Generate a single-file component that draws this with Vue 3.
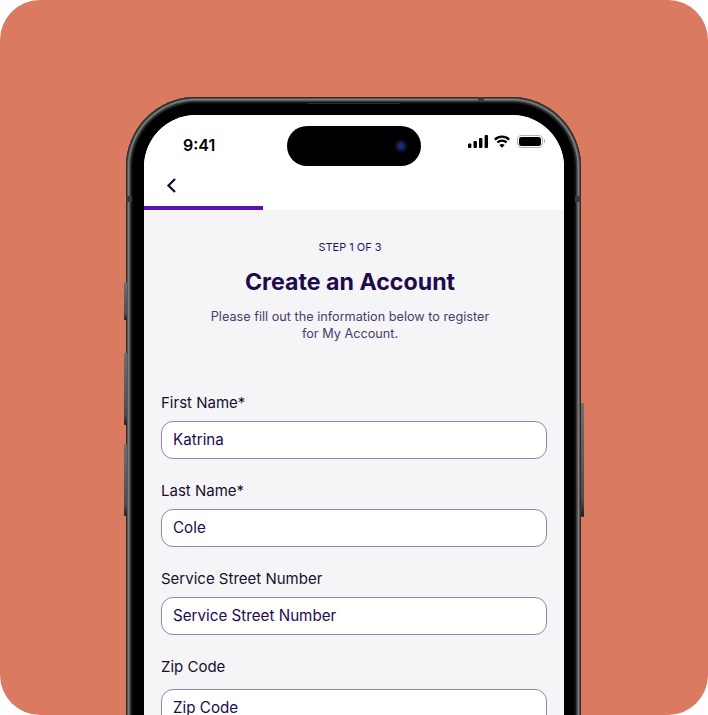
<script setup>
const fields = [
  { label: 'First Name*', value: 'Katrina' },
  { label: 'Last Name*', value: 'Cole' },
  { label: 'Service Street Number', value: 'Service Street Number' },
  { label: 'Zip Code', value: 'Zip Code' },
]
</script>

<template>
  <main class="page">
    <div class="phone">
      <span class="btn btn-l b1"></span>
      <span class="btn btn-l b2"></span>
      <span class="btn btn-l b3"></span>
      <span class="btn btn-r"></span>
      <span class="speaker"></span>
      <span class="band band-top"></span>
      <span class="band band-left"></span>
      <span class="band band-right"></span>
      <div class="rim">
        <div class="screen">
          <div class="island"><span class="lens"></span></div>
          <header class="top">
            <div class="status">
              <span class="time">9:41</span>
              <div class="status-icons">
                <svg width="21" height="13" viewBox="0 0 21 13" fill="#000">
                  <rect x="0" y="8.5" width="3.4" height="4.5" rx="1" />
                  <rect x="5.5" y="6" width="3.4" height="7" rx="1" />
                  <rect x="11" y="3" width="3.4" height="10" rx="1" />
                  <rect x="16.6" y="0" width="3.4" height="13" rx="1" />
                </svg>
                <svg width="16" height="13" viewBox="0 0 16 13" fill="none" stroke="#000">
                  <path d="M.8 4.6C5 .6 11 .6 15.2 4.6" stroke-width="2.2" />
                  <path d="M3.4 7.4C6 5 10 5 12.6 7.4" stroke-width="2.2" />
                  <path d="M8 12.8 5.3 9.9C7 8.6 9 8.6 10.7 9.9Z" fill="#000" stroke="none" />
                </svg>
                <div class="battery"><span class="charge"></span></div>
                <span class="nub"></span>
              </div>
            </div>
            <div class="nav">
              <svg class="back" width="11" height="17" viewBox="0 0 11 17" fill="none">
                <path d="M9 2 2.5 8.5 9 15" stroke="#1a0a3c" stroke-width="2.3" />
              </svg>
            </div>
            <div class="progress"><span class="progress-fill"></span></div>
          </header>
          <section class="content">
            <div class="head">
              <p class="step">STEP 1 OF 3</p>
              <h1 class="title">Create an Account</h1>
              <p class="intro">Please fill out the information below to register<br />for My Account.</p>
            </div>
            <form class="form">
              <div v-for="f in fields" :key="f.label" class="field">
                <label class="label">{{ f.label }}</label>
                <div class="input">{{ f.value }}</div>
              </div>
            </form>
          </section>
        </div>
      </div>
    </div>
  </main>
</template>

<style>
html, body { margin: 0; background: #fff; }
</style>

<style scoped>
.page {
  width: 708px;
  height: 715px;
  box-sizing: border-box;
  background: #da7a60;
  border-radius: 40px;
  overflow: hidden;
  padding: 97px 0 0 126px;
  font-family: Inter, "Liberation Sans", sans-serif;
}
.phone { position: relative; width: 455px; }
.btn {
  position: absolute;
  width: 3px;
  background: linear-gradient(180deg, #6f6f6f 0, #4c4c4c 85%, #1e1e1e 100%);
  border-radius: 1px;
}
.btn-l { left: -2.5px; }
.b1 { top: 185px; height: 38px; }
.b2 { top: 256px; height: 72px; }
.b3 { top: 347px; height: 72px; }
.btn-r { right: -3px; top: 306px; height: 114px; }
.speaker {
  position: absolute;
  left: 182px;
  top: 6px;
  width: 92px;
  height: 1px;
  background: #2a2a2a;
}
.band { position: absolute; background: #3a3a3a; }
.band-top { left: 352px; top: 0; width: 6px; height: 5px; }
.band-left { left: 0; top: 99px; width: 6px; height: 6px; }
.band-right { right: 0; top: 99px; width: 6px; height: 6px; }
.rim {
  box-sizing: border-box;
  height: 720px;
  padding: 18px 17px 0 18px;
  background: #000;
  border-radius: 70px 70px 0 0;
  box-shadow:
    inset 0 0 0 1px #2b2b2b,
    inset 0 0 0 2px #565656,
    inset 0 0 0 3.5px #7c7c7c,
    inset 0 0 0 5px #393939,
    inset 0 0 0 6.5px #141414;
}
.screen {
  position: relative;
  height: 100%;
  border-radius: 52px 52px 0 0;
  overflow: hidden;
  background: #f5f5f8;
}
.island {
  position: absolute;
  left: 143px;
  top: 11px;
  width: 134px;
  height: 40px;
  border-radius: 20px;
  background: #000;
}
.lens {
  position: absolute;
  right: 13px;
  top: 13px;
  width: 14px;
  height: 14px;
  border-radius: 50%;
  background: radial-gradient(circle, #1c2a6e 0 25%, #0b0d22 50%, #050508 100%);
}
.top { background: #fff; }
.status {
  height: 59px;
  box-sizing: border-box;
  padding: 18px 19px 0 39px;
  display: flex;
  justify-content: space-between;
  align-items: flex-start;
}
.time {
  font-size: 16px;
  font-weight: 600;
  line-height: 24px;
  color: #000;
}
.status-icons { display: flex; align-items: center; gap: 5px; height: 14px; margin-top: 1px; }
.battery {
  box-sizing: border-box;
  width: 26px;
  height: 13px;
  padding: 1px;
  border: 1px solid #b0b0b0;
  border-radius: 4px;
  margin-left: 2px;
}
.charge { display: block; height: 100%; background: #000; border-radius: 2.5px; }
.nub { width: 1.5px; height: 4px; background: #b0b0b0; margin-left: -4px; border-radius: 1px; }
.nav { height: 32px; padding-left: 22px; display: flex; align-items: flex-start; }
.back { margin-top: 3px; }
.progress { height: 4px; }
.progress-fill { display: block; width: 119px; height: 100%; background: #5a0fb4; }
.content { padding: 29px 17px 0; }
.head { padding-right: 8px; }
.step {
  margin: 0;
  text-align: center;
  font-size: 11px;
  line-height: 16px;
  color: #2b1260;
}
.title {
  margin: 11px 0 0;
  text-align: center;
  font-size: 23.2px;
  line-height: 32px;
  font-weight: 700;
  color: #1f0a4d;
}
.intro {
  margin: 10px 0 0;
  text-align: center;
  font-size: 12.7px;
  line-height: 17px;
  color: #4a3c6b;
}
.form { margin-top: 51px; display: flex; flex-direction: column; gap: 22px; }
.field { display: flex; flex-direction: column; gap: 8px; }
.field:last-child { gap: 12px; }
.label { font-size: 15px; line-height: 20px; color: #17102b; }
.input {
  box-sizing: border-box;
  height: 38px;
  padding: 0 11px 2px;
  display: flex;
  align-items: center;
  background: #fff;
  border: 1px solid #8f87a5;
  border-radius: 12px;
  font-size: 15.2px;
  color: #1f0a4d;
}
</style>
